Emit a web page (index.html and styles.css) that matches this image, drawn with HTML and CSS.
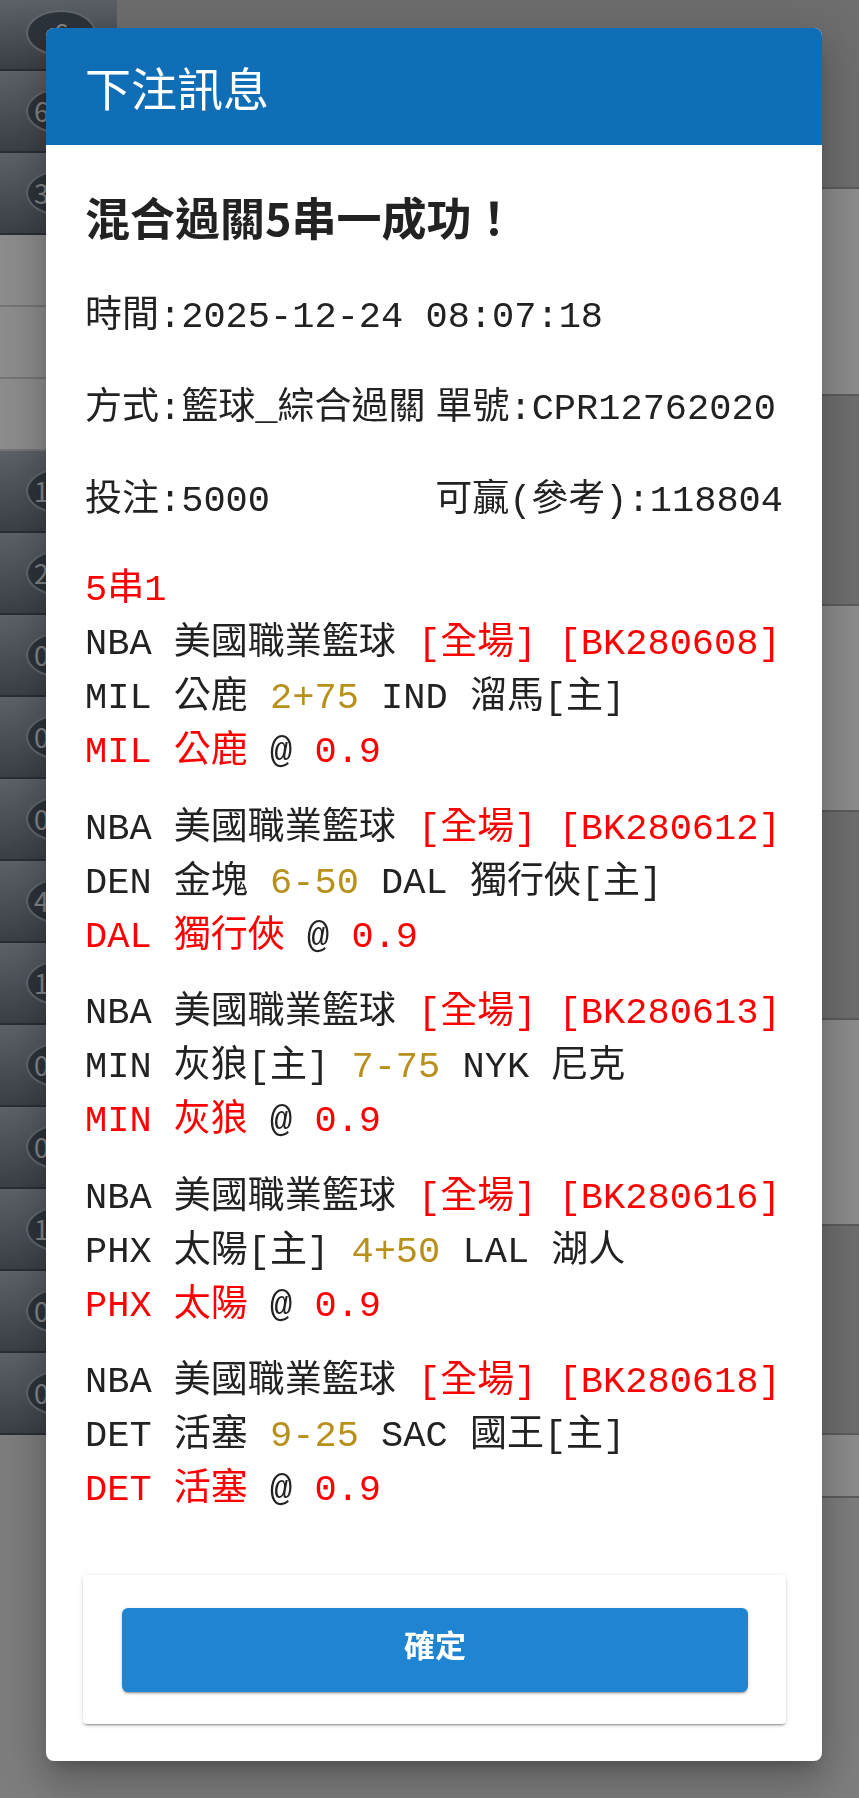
FILE: index.html
```html
<!DOCTYPE html>
<html lang="zh-Hant">
<head>
    <meta charset="UTF-8">
    <meta name="viewport" content="width=device-width, initial-scale=1.0">
    <title>下注訊息</title>
    <link rel="stylesheet" href="styles.css">
</head>
<body>
    <div class="page">
        <div class="sidebar">
            <div class="side-row dark first"><span class="badge center">6</span></div>
            <div class="side-row dark"><span class="badge">60</span></div>
            <div class="side-row dark"><span class="badge">35</span></div>
            <div class="side-row light"></div>
            <div class="side-row light"></div>
            <div class="side-row light"></div>
            <div class="side-row dark"><span class="badge">12</span></div>
            <div class="side-row dark"><span class="badge">24</span></div>
            <div class="side-row dark"><span class="badge">08</span></div>
            <div class="side-row dark"><span class="badge">06</span></div>
            <div class="side-row dark"><span class="badge">04</span></div>
            <div class="side-row dark"><span class="badge">46</span></div>
            <div class="side-row dark"><span class="badge">18</span></div>
            <div class="side-row dark"><span class="badge">09</span></div>
            <div class="side-row dark"><span class="badge">06</span></div>
            <div class="side-row dark"><span class="badge">11</span></div>
            <div class="side-row dark"><span class="badge">05</span></div>
            <div class="side-row dark"><span class="badge">07</span></div>
        </div>
        <div class="main">
            <div class="main-row shade h189"></div>
            <div class="main-row h207"></div>
            <div class="main-row shade h210"></div>
            <div class="main-row h206"></div>
            <div class="main-row shade h208"></div>
            <div class="main-row h206"></div>
            <div class="main-row shade h209"></div>
            <div class="main-row h63"></div>
        </div>
    </div>

    <div class="backdrop"></div>

    <div class="dialog">
        <div class="dialog-header">下注訊息</div>
        <div class="dialog-body">
            <h2 class="result-title">混合過關5串一成功！</h2>

            <p class="info-line">時間:2025-12-24 08:07:18</p>
            <p class="info-line">方式:籃球_綜合過關<span class="gap"></span>單號:CPR12762020</p>
            <p class="info-line split"><span>投注:5000</span><span>可贏(參考):118804</span></p>

            <div class="bets">
                <div class="line red">5串1</div>

                <div class="bet">
                    <div class="line">NBA 美國職業籃球 <span class="red">[全場] [BK280608]</span></div>
                    <div class="line">MIL 公鹿 <span class="gold">2+75</span> IND 溜馬[主]</div>
                    <div class="line"><span class="red">MIL 公鹿</span> @ <span class="red">0.9</span></div>
                </div>

                <div class="bet">
                    <div class="line">NBA 美國職業籃球 <span class="red">[全場] [BK280612]</span></div>
                    <div class="line">DEN 金塊 <span class="gold">6-50</span> DAL 獨行俠[主]</div>
                    <div class="line"><span class="red">DAL 獨行俠</span> @ <span class="red">0.9</span></div>
                </div>

                <div class="bet">
                    <div class="line">NBA 美國職業籃球 <span class="red">[全場] [BK280613]</span></div>
                    <div class="line">MIN 灰狼[主] <span class="gold">7-75</span> NYK 尼克</div>
                    <div class="line"><span class="red">MIN 灰狼</span> @ <span class="red">0.9</span></div>
                </div>

                <div class="bet">
                    <div class="line">NBA 美國職業籃球 <span class="red">[全場] [BK280616]</span></div>
                    <div class="line">PHX 太陽[主] <span class="gold">4+50</span> LAL 湖人</div>
                    <div class="line"><span class="red">PHX 太陽</span> @ <span class="red">0.9</span></div>
                </div>

                <div class="bet">
                    <div class="line">NBA 美國職業籃球 <span class="red">[全場] [BK280618]</span></div>
                    <div class="line">DET 活塞 <span class="gold">9-25</span> SAC 國王[主]</div>
                    <div class="line"><span class="red">DET 活塞</span> @ <span class="red">0.9</span></div>
                </div>
            </div>
        </div>
        <div class="dialog-footer">
            <div class="footer-card">
                <button class="confirm-btn">確定</button>
            </div>
        </div>
    </div>
</body>
</html>
```

FILE: styles.css
```css
body {
    margin: 0;
    height: 1798px;
    overflow: hidden;
    background-color: #e3e3e3;
    font-family: "Noto Sans CJK TC", "Noto Sans", sans-serif;
}

/* page behind the dialog */
.page {
    display: flex;
    height: 1798px;
}
.sidebar {
    width: 117px;
    display: flex;
    flex-direction: column;
}
.side-row {
    height: 82px;
    display: flex;
    align-items: center;
    box-sizing: border-box;
}
.side-row.first {
    height: 71px;
    align-items: flex-start;
    padding-top: 10px;
}
.side-row.dark {
    background: linear-gradient(#a9b2be, #6c7581);
    border-bottom: 2px solid #4d5560;
}
.side-row.light {
    height: 72px;
    background-color: #ffffff;
    border-bottom: 2px solid #d6d6d6;
}
.badge {
    margin-left: 26px;
    width: 70px;
    height: 46px;
    box-sizing: border-box;
    border-radius: 50%;
    border: 2px solid #b3bcc8;
    background-color: #525d6b;
    color: #eef2f6;
    font-size: 27px;
    line-height: 42px;
    padding-left: 6px;
}
.badge.center {
    text-align: center;
    padding-left: 0;
}
.main {
    flex: 1;
    display: flex;
    flex-direction: column;
}
.main-row {
    background-color: #ffffff;
    border-bottom: 2px solid #a8a8a8;
    box-sizing: border-box;
}
.main-row.shade {
    background-color: #c9c9c9;
}
.h189 { height: 189px; }
.h207 { height: 207px; }
.h210 { height: 210px; }
.h206 { height: 206px; }
.h208 { height: 208px; }
.h209 { height: 209px; }
.h63 { height: 63px; }

.backdrop {
    position: fixed;
    inset: 0;
    background-color: rgba(0, 0, 0, 0.45);
}

/* dialog */
.dialog {
    position: absolute;
    left: 46px;
    top: 28px;
    width: 776px;
    background-color: #fff;
    border-radius: 8px;
    overflow: hidden;
    box-shadow: 0 11px 15px -7px rgba(0, 0, 0, 0.2),
                0 24px 38px 3px rgba(0, 0, 0, 0.14),
                0 9px 46px 8px rgba(0, 0, 0, 0.12);
}
.dialog-header {
    height: 117px;
    line-height: 117px;
    padding-left: 39px;
    background-color: #106eb6;
    color: #fff;
    font-size: 46px;
}
.dialog-body {
    padding: 42px 39px 0;
    color: #222;
}
.result-title {
    margin: 0;
    font-size: 45px;
    line-height: 60px;
    font-weight: bold;
}
.info-line,
.line {
    font-family: "Liberation Mono", "Noto Sans CJK TC", monospace;
    font-size: 37px;
    line-height: 54px;
    white-space: nowrap;
}
.info-line {
    margin: 38px 0 0;
}
.result-title + .info-line {
    margin-top: 43px;
}
.gap {
    display: inline-block;
    width: 10px;
}
.split {
    display: flex;
    justify-content: space-between;
}
.bets {
    margin-top: 35px;
}
.bet + .bet {
    margin-top: 22.5px;
}
.red {
    color: #f00;
}
.gold {
    color: #b8901c;
}

.dialog-footer {
    padding: 58px 36px 37px 37px;
}
.footer-card {
    padding: 33px 38px 32px 39px;
    background-color: #fff;
    border-radius: 4px;
    box-shadow: 0 3px 1px -2px rgba(0, 0, 0, 0.2),
                0 2px 2px 0 rgba(0, 0, 0, 0.14),
                0 1px 5px 0 rgba(0, 0, 0, 0.12);
}
.confirm-btn {
    display: block;
    width: 100%;
    height: 84px;
    padding: 0 0 14px;
    border: none;
    border-radius: 6px;
    background-color: #1f84d2;
    color: #fff;
    font-family: "Noto Sans CJK TC", sans-serif;
    font-size: 31px;
    font-weight: bold;
    cursor: pointer;
    box-shadow: 0 3px 1px -2px rgba(0, 0, 0, 0.2),
                0 2px 2px 0 rgba(0, 0, 0, 0.14),
                0 1px 5px 0 rgba(0, 0, 0, 0.12);
}
```
